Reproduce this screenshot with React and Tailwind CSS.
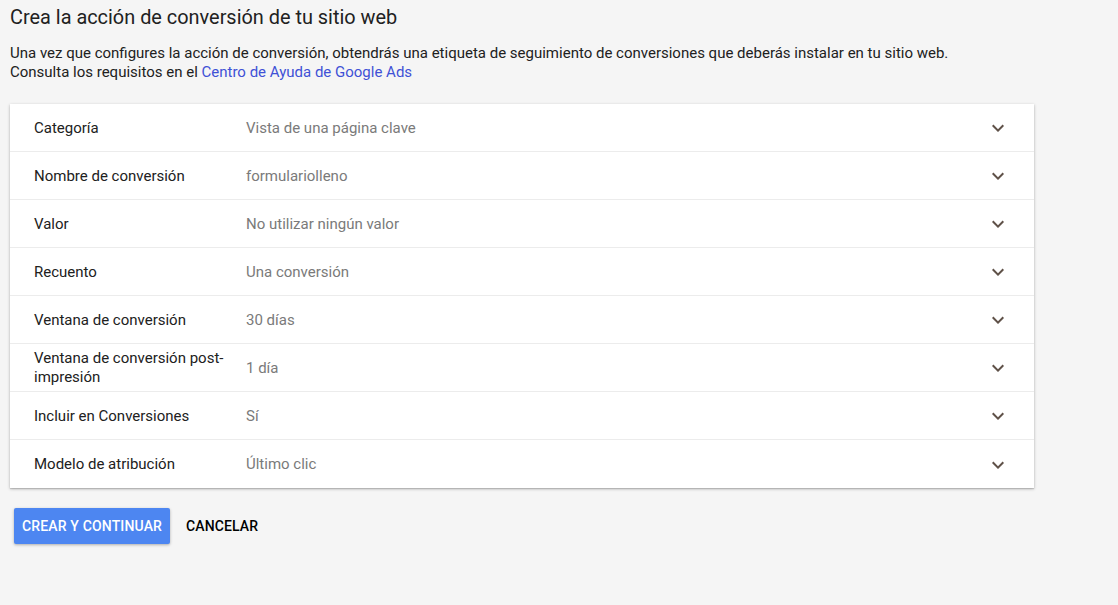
import React from "react";

const rows = [
  ["Categoría", "Vista de una página clave"],
  ["Nombre de conversión", "formulariolleno"],
  ["Valor", "No utilizar ningún valor"],
  ["Recuento", "Una conversión"],
  ["Ventana de conversión", "30 días"],
  ["Ventana de conversión post-impresión", "1 día"],
  ["Incluir en Conversiones", "Sí"],
  ["Modelo de atribución", "Último clic"],
];

function Chevron() {
  return (
    <svg width="24" height="24" viewBox="0 0 24 24" className="shrink-0">
      <path d="M16.59 8.59L12 13.17 7.41 8.59 6 10l6 6 6-6z" fill="#5f5148" />
    </svg>
  );
}

export default function App() {
  return (
    <div
      className="min-h-[605px] w-full bg-[#f5f5f5] text-[#212121]"
      style={{ fontFamily: "Roboto, 'Noto Sans', sans-serif" }}
    >
      <div className="pl-[10px] pt-[6px]">
        <h1 className="text-[19.9px] leading-[24px] font-normal text-[#212121]">
          Crea la acción de conversión de tu sitio web
        </h1>
        <p className="mt-[14px] text-[15px] leading-[19px] text-[#212121]">
          Una vez que configures la acción de conversión, obtendrás una etiqueta de seguimiento de conversiones que deberás instalar en tu sitio web.
          <br />
          Consulta los requisitos en el{" "}
          <span className="text-[#3f51d6]">Centro de Ayuda de Google Ads</span>
        </p>
        <div className="mt-[22px] w-[1024px] bg-white shadow-[0_1px_3px_rgba(0,0,0,0.25),0_1px_1px_rgba(0,0,0,0.12)]">
          {rows.map(([label, value], i) => (
            <div
              key={label}
              className={
                "flex h-[48px] items-center pl-[24px] pr-[24px] pt-[1px] " +
                (i < rows.length - 1 ? "border-b border-[#ececec]" : "")
              }
            >
              <div className="w-[212px] pr-[4px] text-[15px] leading-[19px] text-[#212121]">
                {label}
              </div>
              <div className="flex-1 text-[15px] text-[#7a7a7a]">{value}</div>
              <Chevron />
            </div>
          ))}
        </div>
        <div className="mt-[20px] flex items-center gap-[16px] pl-[4px]">
          <button className="h-[36px] rounded-[2px] bg-[#4d86f1] px-[8px] text-[14px] font-medium tracking-[0.15px] text-white shadow-[0_1px_3px_rgba(0,0,0,0.3)]">
            CREAR Y CONTINUAR
          </button>
          <button className="h-[36px] px-0 text-[14px] font-medium tracking-[0.1px] text-[#000]">
            CANCELAR
          </button>
        </div>
      </div>
    </div>
  );
}
